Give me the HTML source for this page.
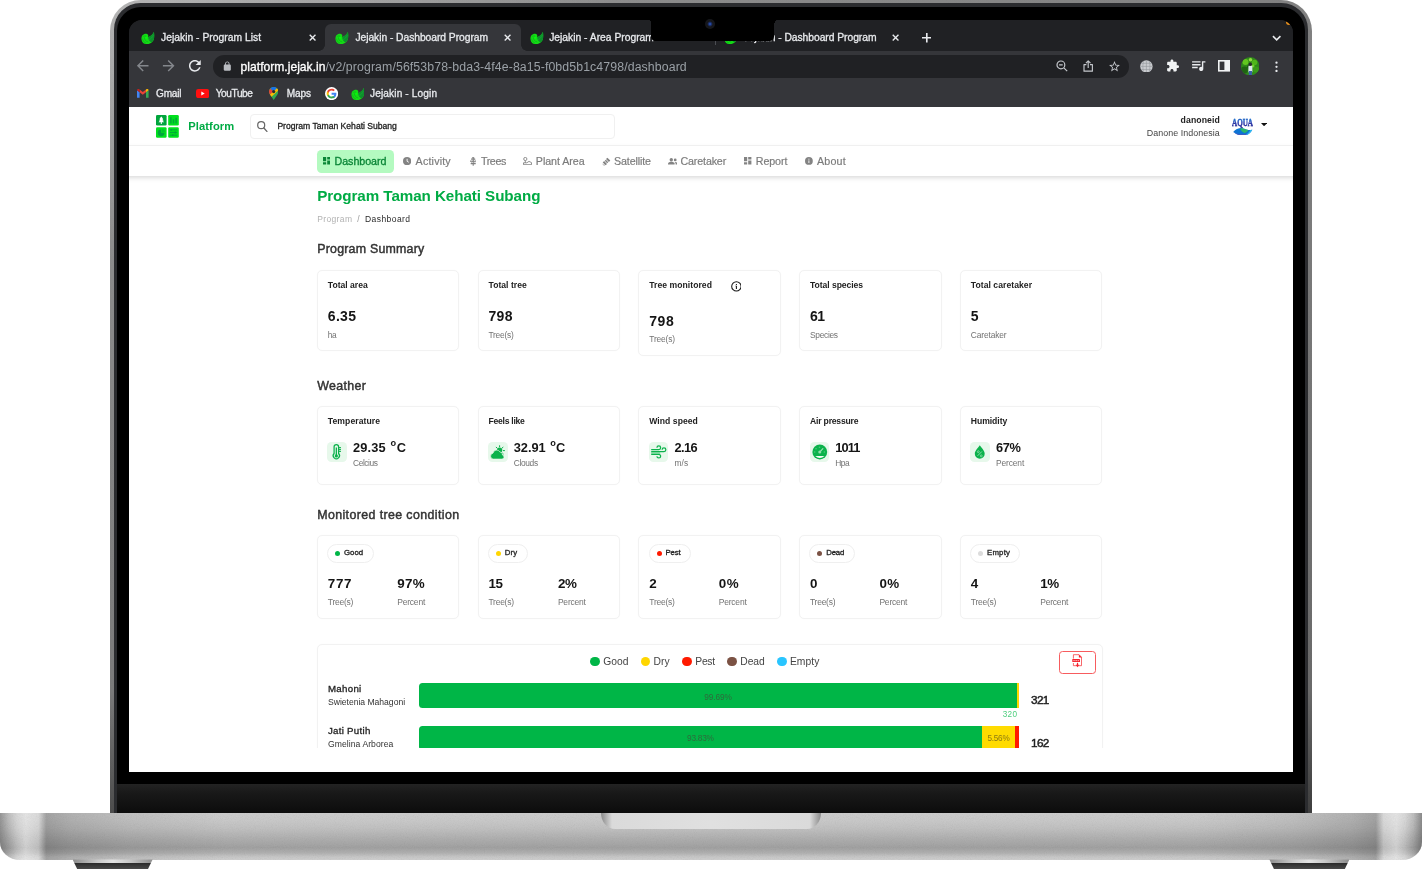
<!DOCTYPE html>
<html lang="en">
<head>
<meta charset="utf-8">
<title>Jejakin - Dashboard Program</title>
<style>
*{box-sizing:border-box;margin:0;padding:0}
html,body{width:1422px;height:869px;background:#fff;overflow:hidden}
body{font-family:"Liberation Sans",sans-serif;position:relative}
.abs,.t,svg.i{position:absolute}
.t{white-space:pre;line-height:1;display:block}
.lid{left:110px;top:0;width:1202px;height:813px;border-radius:31px 31px 0 0;background:radial-gradient(ellipse 520px 260px at 0 0,rgba(255,255,255,.3),rgba(255,255,255,0)),linear-gradient(90deg,rgba(255,255,255,.05) 0,rgba(0,0,0,.09) 100%),linear-gradient(180deg,#8e8e8e 0,#828282 45%,#747474 85%,#4c4c4c 97%,#444 100%)}
.lid2{left:113.7px;top:3.4px;width:1194.4px;height:810px;border-radius:26.5px 26.5px 0 0;background:#2b2c2f}
.lid3{left:117.1px;top:7px;width:1187.7px;height:806px;border-radius:24px 24px 0 0;background:#000}
.chin{left:117.1px;top:784px;width:1187.7px;height:29px;background:linear-gradient(180deg,#232323 0,#191919 30%,#0c0c0c 100%)}
.screen{left:129px;top:20px;width:1164px;height:752.4px;border-radius:13px 13px 0 0;overflow:hidden;background:#202124}
.in{left:-129px;top:-20px;width:1422px;height:869px;will-change:transform}
.notch{left:651px;top:19px;width:123.4px;height:21.7px;background:#000;border-radius:0 0 4.5px 4.5px}
.base{left:0;top:812.7px;width:1422px;height:46.9px;border-radius:0 0 20px 20px/0 0 18px 18px;overflow:hidden;
 background:linear-gradient(180deg,#cecece 0,#cbcbcb 15%,#c2c2c2 33%,#b0b0b0 55%,#a2a2a2 74%,#b2b2b2 85%,#c8c8c8 93%,#d0d0d0 100%)}
.base:before{content:"";position:absolute;left:0;top:0;width:100%;height:100%;
 background:linear-gradient(90deg,rgba(70,70,70,.4) 0,rgba(90,90,90,.12) .6%,rgba(255,255,255,.25) 1.2%,rgba(255,255,255,.5) 1.8%,rgba(255,255,255,.3) 2.7%,rgba(0,0,0,.2) 3.25%,rgba(0,0,0,.13) 5%,rgba(0,0,0,.06) 9%,rgba(0,0,0,0) 16%,rgba(0,0,0,0) 84%,rgba(0,0,0,.06) 91%,rgba(0,0,0,.13) 95%,rgba(0,0,0,.2) 96.75%,rgba(255,255,255,.3) 97.3%,rgba(255,255,255,.5) 98.2%,rgba(255,255,255,.25) 98.8%,rgba(90,90,90,.12) 99.4%,rgba(60,60,60,.45) 100%)}
.lip{left:600.8px;top:812.8px;width:220.4px;height:16.2px;border-radius:0 0 14px 14px/0 0 16px 16px;background:linear-gradient(90deg,#8a8a8a 0,#dadada 5%,#e0e0e0 50%,#dadada 95%,#8a8a8a 100%)}
.foot{top:859.4px;height:10px;width:80px;background:linear-gradient(180deg,rgba(0,0,0,0) 0,rgba(0,0,0,0) 38%,#2b2b2b 42%,#4a4a4a 100%),linear-gradient(90deg,#8d8d8d 0,#c9c9c9 30%,#e3e3e3 50%,#c9c9c9 70%,#8d8d8d 100%);clip-path:polygon(0 0,100% 0,94% 100%,6% 100%)}
/* chrome */
.tabstrip{left:129px;top:20px;width:1164px;height:31.3px;background:#202124}
.toolbar{left:129px;top:51.3px;width:1164px;height:56px;background:#35363a}
.tabon{left:325px;top:24.3px;width:196px;height:27.2px;background:#35363a;border-radius:6px 6px 0 0}
.tabon:before,.tabon:after{content:"";position:absolute;bottom:0;width:6px;height:6px;background:radial-gradient(circle at 0 0,rgba(0,0,0,0) 5.5px,#35363a 6px)}
.tabon:before{left:-6px}
.tabon:after{right:-6px;background:radial-gradient(circle at 100% 0,rgba(0,0,0,0) 5.5px,#35363a 6px)}
.omni{left:213.3px;top:55px;width:915.7px;height:22.5px;border-radius:11.3px;background:#202124}
.ct{-webkit-text-stroke:.3px currentColor}
/* app */
.hdr{left:129px;top:107.4px;width:1164px;height:39px;background:#fff;border-bottom:1px solid #f5f5f5}
.nav{left:115px;top:146.4px;width:1192px;height:30px;background:#fff;box-shadow:0 1.5px 5px rgba(0,0,0,.17)}
.search{left:250.4px;top:114.2px;width:364.8px;height:24.4px;border:1px solid #f0f0f0;border-radius:4px;background:#fff}
.pillnav{left:316.8px;top:149.8px;width:77px;height:22.8px;border-radius:4.5px;background:#b4fac0}
.card{border:1px solid #f2f2f2;border-radius:5px;background:#fff;box-shadow:0 0 1.5px rgba(0,0,0,.025)}
.ib{width:19.6px;height:19.8px;border-radius:4.5px;background:#e7f8eb}
.pill{height:19px;border:1px solid #efefef;border-radius:9.5px;background:#fff}
.dot{border-radius:50%}
.pageclip{left:129px;top:107.4px;width:1164px;height:640.6px;overflow:hidden}
.pagein{left:-129px;top:-107.4px;width:1422px;height:869px}

.md1{-webkit-text-stroke:.18px currentColor}.md{-webkit-text-stroke:.3px currentColor}.md2{-webkit-text-stroke:.45px currentColor}
</style>
</head>
<body>
<div class="abs lid">
</div>
<div class="abs lid2">
</div>
<div class="abs lid3">
</div>
<div class="abs chin">
</div>
<div class="abs screen">
<div class="abs in">
<div class="abs" style="left:129px;top:107.4px;width:1164px;height:666px;background:#fff">
</div>
<div class="abs tabstrip">
</div>
<div class="abs toolbar">
</div>
<div class="abs tabon">
</div>
<svg class="i" style="left:141.3px;top:32.1px" width="13.4" height="12.3" viewBox="0 0 24 22" >
<path d="M23.1.2C23.9 4 24 9 23 13 22 17 18 20.500 13 21.600 9 22.400 4 21 2 17 .3 13.500 .3 9 2.500 6 4.500 3.600 8 2.600 10.800 3.400 12.600 4 13.400 5.600 12.900 7.200 12.600 8 12.700 8.800 13.200 9 17 8 21 5 23.100.2Z" fill="#14dd14"/>
<path d="M23.100.2C23.900 4 24 9 23 13 22.300 15.500 20.600 17.400 18.600 18.500 16 17.600 14 15.200 13.400 12.500 13.100 11.200 13 10 13.200 9 17 8 21 5 23.100.2Z" fill="#0d8f2b"/>
<path d="M14.500 13.500C17.500 12.500 20.500 9.500 22.300 5.500" stroke="#19b53a" stroke-width=".9" fill="none"/>
<path d="M3.600 8.200C5 7 7 6.800 8.600 7.400M6.200 10.500C6.200 14 8.500 17 12.500 17.800M3 12.500C3.200 15.500 5 18.200 8 19.500" stroke="#0aa51e" stroke-width="1.100" fill="none" stroke-linecap="round"/>
<circle cx="9.300" cy="10.400" r="1.900" fill="#00ff0a"/>
</svg>
<span class="t ct" style="left:161.0px;top:32.7px;font-size:10.3px;font-weight:400;color:#e8eaed;letter-spacing:0.02px;">Jejakin - Program List</span>
<svg class="i" style="left:335.4px;top:32.1px" width="13.4" height="12.3" viewBox="0 0 24 22" >
<path d="M23.1.2C23.9 4 24 9 23 13 22 17 18 20.500 13 21.600 9 22.400 4 21 2 17 .3 13.500 .3 9 2.500 6 4.500 3.600 8 2.600 10.800 3.400 12.600 4 13.400 5.600 12.900 7.200 12.600 8 12.700 8.800 13.200 9 17 8 21 5 23.100.2Z" fill="#14dd14"/>
<path d="M23.100.2C23.900 4 24 9 23 13 22.300 15.500 20.600 17.400 18.600 18.500 16 17.600 14 15.200 13.400 12.500 13.100 11.200 13 10 13.200 9 17 8 21 5 23.100.2Z" fill="#0d8f2b"/>
<path d="M14.500 13.500C17.500 12.500 20.500 9.500 22.300 5.500" stroke="#19b53a" stroke-width=".9" fill="none"/>
<path d="M3.600 8.200C5 7 7 6.800 8.600 7.400M6.200 10.500C6.200 14 8.500 17 12.500 17.800M3 12.500C3.200 15.500 5 18.200 8 19.500" stroke="#0aa51e" stroke-width="1.100" fill="none" stroke-linecap="round"/>
<circle cx="9.300" cy="10.400" r="1.900" fill="#00ff0a"/>
</svg>
<span class="t ct" style="left:355.4px;top:32.7px;font-size:10.3px;font-weight:400;color:#e8eaed;letter-spacing:-0.05px;">Jejakin - Dashboard Program</span>
<svg class="i" style="left:530.3px;top:32.1px" width="13.4" height="12.3" viewBox="0 0 24 22" >
<path d="M23.1.2C23.9 4 24 9 23 13 22 17 18 20.500 13 21.600 9 22.400 4 21 2 17 .3 13.500 .3 9 2.500 6 4.500 3.600 8 2.600 10.800 3.400 12.600 4 13.400 5.600 12.900 7.200 12.600 8 12.700 8.800 13.200 9 17 8 21 5 23.100.2Z" fill="#14dd14"/>
<path d="M23.100.2C23.900 4 24 9 23 13 22.300 15.500 20.600 17.400 18.600 18.500 16 17.600 14 15.200 13.400 12.500 13.100 11.200 13 10 13.200 9 17 8 21 5 23.100.2Z" fill="#0d8f2b"/>
<path d="M14.500 13.500C17.500 12.500 20.500 9.500 22.300 5.500" stroke="#19b53a" stroke-width=".9" fill="none"/>
<path d="M3.600 8.200C5 7 7 6.800 8.600 7.400M6.200 10.500C6.200 14 8.500 17 12.500 17.800M3 12.500C3.200 15.500 5 18.200 8 19.500" stroke="#0aa51e" stroke-width="1.100" fill="none" stroke-linecap="round"/>
<circle cx="9.300" cy="10.400" r="1.900" fill="#00ff0a"/>
</svg>
<span class="t ct" style="left:549.2px;top:32.7px;font-size:10.3px;font-weight:400;color:#e8eaed;">Jejakin - Area Program</span>
<div class="abs" style="left:714.5px;top:31px;width:1px;height:14px;background:#4b4d52">
</div>
<svg class="i" style="left:723.8px;top:32.1px" width="13.4" height="12.3" viewBox="0 0 24 22" >
<path d="M23.1.2C23.9 4 24 9 23 13 22 17 18 20.500 13 21.600 9 22.400 4 21 2 17 .3 13.500 .3 9 2.500 6 4.500 3.600 8 2.600 10.800 3.400 12.600 4 13.400 5.600 12.900 7.200 12.600 8 12.700 8.800 13.200 9 17 8 21 5 23.100.2Z" fill="#14dd14"/>
<path d="M23.100.2C23.900 4 24 9 23 13 22.300 15.500 20.600 17.400 18.600 18.500 16 17.600 14 15.200 13.400 12.500 13.100 11.200 13 10 13.200 9 17 8 21 5 23.100.2Z" fill="#0d8f2b"/>
<path d="M14.500 13.500C17.500 12.500 20.500 9.500 22.300 5.500" stroke="#19b53a" stroke-width=".9" fill="none"/>
<path d="M3.600 8.200C5 7 7 6.800 8.600 7.400M6.200 10.500C6.200 14 8.500 17 12.500 17.800M3 12.500C3.200 15.500 5 18.200 8 19.500" stroke="#0aa51e" stroke-width="1.100" fill="none" stroke-linecap="round"/>
<circle cx="9.300" cy="10.400" r="1.900" fill="#00ff0a"/>
</svg>
<span class="t ct" style="left:743.6px;top:32.7px;font-size:10.3px;font-weight:400;color:#e8eaed;letter-spacing:-0.04px;">Jejakin - Dashboard Program</span>
<svg class="i" style="left:309.4px;top:34.4px" width="7.2" height="7.2" viewBox="0 0 10 10" >
<path d="M1 1l8 8M9 1l-8 8" stroke="#e8eaed" stroke-width="1.9" fill="none"/>
</svg>
<svg class="i" style="left:504.2px;top:34.4px" width="7.2" height="7.2" viewBox="0 0 10 10" >
<path d="M1 1l8 8M9 1l-8 8" stroke="#e8eaed" stroke-width="1.9" fill="none"/>
</svg>
<svg class="i" style="left:892.0px;top:34.4px" width="7.2" height="7.2" viewBox="0 0 10 10" >
<path d="M1 1l8 8M9 1l-8 8" stroke="#e8eaed" stroke-width="1.9" fill="none"/>
</svg>
<svg class="i" style="left:921.9px;top:33.2px" width="9.6" height="9.6" viewBox="0 0 10 10" >
<path d="M5 0v10M0 5h10" stroke="#e8eaed" stroke-width="1.7" fill="none"/>
</svg>
<svg class="i" style="left:1271.6px;top:34.8px" width="9.4" height="6.0" viewBox="0 0 10 6" >
<path d="M1 1l4 4 4-4" stroke="#e8eaed" stroke-width="1.7" fill="none"/>
</svg>
<div class="abs dot" style="left:1285.5px;top:19px;width:6px;height:6px;background:#e8901c">
</div>
<svg class="i" style="left:134.3px;top:57.3px" width="17.4" height="17.4" viewBox="0 0 24 24" >
<path fill="#84878c" d="M20 11H7.83l5.59-5.59L12 4l-8 8 8 8 1.41-1.41L7.83 13H20v-2z"/>
</svg>
<svg class="i" style="left:160.2px;top:57.3px" width="17.4" height="17.4" viewBox="0 0 24 24" >
<path fill="#84878c" d="M12 4l-1.41 1.41L16.17 11H4v2h12.17l-5.58 5.59L12 20l8-8z"/>
</svg>
<svg class="i" style="left:186.3px;top:57.1px" width="17.7" height="17.7" viewBox="0 0 24 24" >
<path fill="#e8eaed" d="M17.65 6.35C16.2 4.9 14.21 4 12 4c-4.42 0-7.99 3.58-7.99 8s3.57 8 7.99 8c3.73 0 6.84-2.55 7.73-6h-2.08c-.82 2.33-3.04 4-5.65 4-3.31 0-6-2.69-6-6s2.69-6 6-6c1.66 0 3.14.69 4.22 1.78L13 11h7V4l-2.35 2.35z"/>
</svg>
<div class="abs omni">
</div>
<svg class="i" style="left:222.1px;top:61.3px" width="10.6" height="10.6" viewBox="0 0 24 24" >
<path fill="#b9bcc1" d="M18 8h-1V6c0-2.76-2.24-5-5-5S7 3.24 7 6v2H6c-1.1 0-2 .9-2 2v10c0 1.1.9 2 2 2h12c1.1 0 2-.9 2-2V10c0-1.1-.9-2-2-2zM9 6c0-1.66 1.34-3 3-3s3 1.34 3 3v2H9V6z"/>
</svg>
<span class="t ct" style="left:240.6px;top:61.0px;font-size:12.1px;font-weight:400;color:#ffffff;letter-spacing:0.01px;">platform.jejak.in</span>
<span class="t" style="left:325.6px;top:60.8px;font-size:12.3px;font-weight:400;color:#9aa0a6;letter-spacing:0.11px;">/v2/program/56f53b78-bda3-4f4e-8a15-f0bd5b1c4798/dashboard</span>
<svg class="i" style="left:1056.0px;top:60.2px" width="12.0" height="12.0" viewBox="0 0 12 12" >
<circle cx="4.9" cy="4.9" r="3.9" fill="none" stroke="#c4c7cc" stroke-width="1.2"/>
<path d="M7.8 7.8l3.4 3.4M3.1 4.9h3.6" stroke="#c4c7cc" stroke-width="1.2" fill="none"/>
</svg>
<svg class="i" style="left:1083.0px;top:60.2px" width="10.4" height="12.0" viewBox="0 0 10.4 12" >
<path d="M3.4 4.6H1v6.6h8.4V4.6H7M5.2 8V1M2.9 3.1L5.2.9l2.3 2.2" stroke="#c4c7cc" stroke-width="1.15" fill="none" stroke-linejoin="round"/>
</svg>
<svg class="i" style="left:1107.6px;top:59.8px" width="13.0" height="13.0" viewBox="0 0 24 24" >
<path fill="#c4c7cc" d="M22 9.24l-7.19-.62L12 2 9.19 8.63 2 9.24l5.46 4.73L5.82 21 12 17.27 18.18 21l-1.63-7.03L22 9.24zM12 15.4l-3.76 2.27 1-4.28-3.32-2.88 4.38-.38L12 6.1l1.71 4.04 4.38.38-3.32 2.88 1 4.28L12 15.4z"/>
</svg>
<svg class="i" style="left:1139.8px;top:59.7px" width="12.8" height="12.8" viewBox="0 0 12.8 12.8" >
<circle cx="6.4" cy="6.4" r="6.2" fill="#c9cbcf"/>
<path d="M6.4.2v12.4M.2 6.4h12.4M1.2 3.3h10.4M1.2 9.5h10.4M3.6.9C2.6 4 2.6 8.8 3.6 11.9M9.2.9c1 3.100 1 7.900 0 11" stroke="#8f9296" stroke-width=".55" fill="none"/>
</svg>
<svg class="i" style="left:1165.6px;top:59.3px" width="13.6" height="13.6" viewBox="0 0 24 24" >
<path fill="#f1f3f4" d="M20.5 11H19V7c0-1.1-.9-2-2-2h-4V3.500C13 2.120 11.880 1 10.500 1S8 2.120 8 3.500V5H4c-1.100 0-1.990.9-1.990 2v3.800H3.500c1.490 0 2.700 1.210 2.700 2.700s-1.210 2.700-2.700 2.700H2V20c0 1.100.9 2 2 2h3.800v-1.500c0-1.490 1.210-2.700 2.700-2.700 1.490 0 2.700 1.210 2.700 2.700V22H17c1.100 0 2-.9 2-2v-4h1.500c1.380 0 2.500-1.120 2.500-2.500S21.880 11 20.500 11z"/>
</svg>
<svg class="i" style="left:1189.6px;top:56.8px" width="16.8" height="16.8" viewBox="0 0 24 24" >
<path fill="#e8eaed" d="M15 6H3v2h12V6zm0 4H3v2h12v-2zM3 16h8v-2H3v2zM17 6v8.180c-.310-.110-.650-.180-1-.180-1.660 0-3 1.340-3 3s1.340 3 3 3 3-1.340 3-3V8h3V6h-5z"/>
</svg>
<svg class="i" style="left:1218.4px;top:60.4px" width="12.0" height="11.6" viewBox="0 0 12 11.6" >
<rect x=".8" y=".8" width="10.4" height="10" fill="none" stroke="#f1f3f4" stroke-width="1.6"/>
<rect x="6.4" y=".8" width="4.8" height="10" fill="#f1f3f4"/>
</svg>
<svg class="i" style="left:1241.0px;top:56.8px" width="18.4" height="18.4" viewBox="0 0 18.4 18.4" >
<defs>
<clipPath id="av">
<circle cx="9.2" cy="9.2" r="9.2"/>
</clipPath>
</defs>
<g clip-path="url(#av)">
<rect width="18.4" height="18.4" fill="#2f8a1a"/>
<circle cx="4.500" cy="5" r="3" fill="#62c61f"/>
<circle cx="13.500" cy="5.500" r="2.800" fill="#4fb51a"/>
<circle cx="3.500" cy="13" r="3.400" fill="#1f6412"/>
<circle cx="15" cy="12.500" r="3" fill="#3a9a18"/>
<circle cx="9.500" cy="2.800" r="1.800" fill="#8fdc3e"/>
<circle cx="8" cy="10" r="2" fill="#1d5c12"/>
<circle cx="12" cy="9" r="1.500" fill="#6fd22b"/>
<rect x="7.400" y="8.600" width="4" height="7" rx="1.200" fill="#dfe6ee"/>
<rect x="7.800" y="14" width="3.200" height="4.400" fill="#3a5fa8"/>
<circle cx="9.300" cy="7.300" r="1.700" fill="#2a2a2a"/>
</g>
</svg>
<svg class="i" style="left:1275.2px;top:60.6px" width="3.0" height="11.6" viewBox="0 0 3 11.6" >
<circle cx="1.5" cy="1.7" r="1.150" fill="#e8eaed"/>
<circle cx="1.5" cy="5.800" r="1.150" fill="#e8eaed"/>
<circle cx="1.5" cy="9.900" r="1.150" fill="#e8eaed"/>
</svg>
<svg class="i" style="left:137.2px;top:89.2px" width="11.6" height="8.8" viewBox="0 0 11.6 8.8" >
<path d="M0 8.800V1.300L2.600 3.300v5.500z" fill="#4285f4"/>
<path d="M11.600 8.800V1.300L9 3.300v5.500z" fill="#34a853"/>
<path d="M2.600 3.300L5.800 5.700 9 3.300V.5L5.800 2.900 2.600.5z" fill="#ea4335"/>
<path d="M0 1.300C0 .2 1.200-.4 2.100.2L2.600.5v2.800z" fill="#c5221f"/>
<path d="M11.600 1.300c0-1.100-1.200-1.700-2.100-1.100L9 .5v2.800z" fill="#fbbc04"/>
</svg>
<span class="t ct" style="left:156.1px;top:89.1px;font-size:10.1px;font-weight:400;color:#e8eaed;letter-spacing:-0.26px;">Gmail</span>
<svg class="i" style="left:195.7px;top:89.1px" width="13.2" height="9.1" viewBox="0 0 13.2 9.1" >
<rect width="13.2" height="9.1" rx="2.300" fill="#ff0f0f"/>
<path d="M5.300 2.600v3.900l3.400-1.950z" fill="#fff"/>
</svg>
<span class="t ct" style="left:215.7px;top:89.1px;font-size:10.1px;font-weight:400;color:#e8eaed;letter-spacing:-0.40px;">YouTube</span>
<svg class="i" style="left:269.0px;top:87.2px" width="9.4" height="12.9" viewBox="0 0 9.4 12.9" >
<path d="M4.700 0C2.100 0 0 2.100 0 4.700c0 1.100.4 2.100 1 2.900L4.700 12.900 8.400 7.600c.6-.8 1-1.800 1-2.900C9.400 2.100 7.300 0 4.700 0z" fill="#34a853"/>
<path d="M4.700 0C3.300 0 2 .6 1.200 1.600L4.700 4.700 8 1.300C7.200.5 6 0 4.700 0z" fill="#1a73e8"/>
<path d="M1.200 1.600C.4 2.400 0 3.500 0 4.700c0 1.100.4 2.100 1 2.900L4.700 4.700z" fill="#ea4335"/>
<path d="M8 1.300L1 7.600l1.500 2.100L9.300 3.600C9.100 2.700 8.600 1.900 8 1.300z" fill="#fbbc04"/>
<circle cx="4.700" cy="4.600" r="1.600" fill="#2a2b2e"/>
</svg>
<span class="t ct" style="left:286.7px;top:89.1px;font-size:10.1px;font-weight:400;color:#e8eaed;letter-spacing:-0.13px;">Maps</span>
<svg class="i" style="left:324.8px;top:87.1px" width="13.2" height="13.2" viewBox="0 0 48 48" >
<circle cx="24" cy="24" r="24" fill="#fff"/>
<g transform="translate(24 24) scale(1.2) translate(-24 -24)">
<path fill="#4285f4" d="M38.500 24.400c0-1.100-.1-2.100-.3-3.100H24v5.900h8.100c-.3 1.900-1.400 3.500-3 4.500v3.800h4.900c2.800-2.600 4.500-6.500 4.500-11.100z"/>
<path fill="#34a853" d="M24 39c4.100 0 7.500-1.300 10-3.600l-4.900-3.800c-1.300.9-3.100 1.500-5.100 1.500-3.900 0-7.200-2.600-8.400-6.200h-5v3.900C13.100 35.700 18.200 39 24 39z"/>
<path fill="#fbbc05" d="M15.600 26.900c-.3-.9-.5-1.900-.5-2.900s.2-2 .5-2.900v-3.900h-5C9.600 19.200 9 21.500 9 24s.6 4.800 1.600 6.800z"/>
<path fill="#ea4335" d="M24 14.900c2.200 0 4.200.8 5.700 2.200l4.300-4.300C31.500 10.500 28.100 9 24 9c-5.800 0-10.900 3.300-13.400 8.200l5 3.900c1.200-3.600 4.500-6.200 8.400-6.200z"/>
</g>
</svg>
<svg class="i" style="left:350.8px;top:87.9px" width="13.4" height="12.3" viewBox="0 0 24 22" >
<path d="M23.1.2C23.9 4 24 9 23 13 22 17 18 20.500 13 21.600 9 22.400 4 21 2 17 .3 13.500 .3 9 2.500 6 4.500 3.600 8 2.600 10.800 3.400 12.600 4 13.400 5.600 12.900 7.200 12.600 8 12.700 8.800 13.200 9 17 8 21 5 23.100.2Z" fill="#14dd14"/>
<path d="M23.100.2C23.900 4 24 9 23 13 22.300 15.500 20.600 17.400 18.600 18.500 16 17.600 14 15.200 13.400 12.500 13.100 11.200 13 10 13.200 9 17 8 21 5 23.100.2Z" fill="#0d8f2b"/>
<path d="M14.500 13.500C17.500 12.500 20.500 9.500 22.300 5.500" stroke="#19b53a" stroke-width=".9" fill="none"/>
<path d="M3.600 8.200C5 7 7 6.800 8.600 7.400M6.200 10.500C6.200 14 8.500 17 12.500 17.800M3 12.500C3.200 15.500 5 18.200 8 19.500" stroke="#0aa51e" stroke-width="1.100" fill="none" stroke-linecap="round"/>
<circle cx="9.300" cy="10.400" r="1.900" fill="#00ff0a"/>
</svg>
<span class="t ct" style="left:370.0px;top:89.1px;font-size:10.1px;font-weight:400;color:#e8eaed;letter-spacing:0.14px;">Jejakin - Login</span>
<div class="abs hdr">
</div>
<svg class="i" style="left:156.3px;top:115.3px" width="22.8" height="22.8" viewBox="0 0 22.8 22.8" >
<rect x="0" y="0" width="10.6" height="10.6" rx="1.300" fill="#00a53c"/>
<rect x="12.2" y="0" width="10.6" height="10.6" rx="1.300" fill="#00e11d"/>
<rect x="0" y="12.2" width="10.6" height="10.6" rx="1.300" fill="#00e11d"/>
<rect x="12.2" y="12.2" width="10.6" height="10.6" rx="1.300" fill="#00e11d"/>
<path d="M5.300 1.600L7.200 3.700H6.300L7.700 5.400H6.500L8.100 7.300H5.800V9H4.800V7.300H2.500L4.100 5.400H2.900L4.300 3.700H3.400z" fill="#fff"/>
<path d="M14.200 2.200h1.400v6.200h-1.400zM16.800 4.200h1.400v4.200h-1.400zM19.400 2.800h1.400v5.600h-1.400z" fill="#00a53c"/>
<path d="M5.100 14.400v3.400h3.400a3.400 3.400 0 1 1-3.400-3.400z" fill="#00a53c"/>
<path d="M5.900 13.900a3.200 3.200 0 0 1 3.100 3.100H5.900z" fill="#00c42c"/>
<path d="M13.900 14.800h7.200M13.900 17.500h7.200M13.900 20.200h7.200" stroke="#00a53c" stroke-width=".9"/>
<path d="M15.300 13.900v1.800M19.300 16.600v1.800M16.700 19.300v1.800" stroke="#00a53c" stroke-width="1.300"/>
</svg>
<span class="t" style="left:188.2px;top:121.0px;font-size:11.2px;font-weight:700;color:#00ab44;letter-spacing:0.09px;">Platform</span>
<div class="abs search">
</div>
<svg class="i" style="left:257.2px;top:121.2px" width="10.4" height="11.0" viewBox="0 0 10.4 11" >
<circle cx="4.200" cy="4.200" r="3.500" fill="none" stroke="#686868" stroke-width="1.250"/>
<path d="M6.900 7l3 3.400" stroke="#686868" stroke-width="1.350" stroke-linecap="round"/>
</svg>
<span class="t md" style="left:277.4px;top:122.1px;font-size:8.6px;font-weight:400;color:#222;letter-spacing:-0.01px;">Program Taman Kehati Subang</span>
<span class="t" style="left:1180.6px;top:116.0px;font-size:8.7px;font-weight:700;color:#222;letter-spacing:0.08px;">danoneid</span>
<span class="t" style="left:1146.8px;top:128.6px;font-size:8.9px;font-weight:400;color:#444;letter-spacing:0.06px;">Danone Indonesia</span>
<span class="t" style="left:1232.1px;top:118.3px;font-size:10.2px;font-weight:700;color:#2c36a6;font-family:&quot;Liberation Serif&quot;,serif;transform:scaleX(.7);transform-origin:0 0;background:linear-gradient(180deg,#1c8ee2 8%,#2a3cae 45%,#2b2c96 80%);-webkit-background-clip:text;background-clip:text;color:transparent;-webkit-text-stroke:.35px rgba(43,50,160,.55);">AQUA</span>
<svg class="i" style="left:1233.3px;top:127.7px" width="19.4" height="7.8" viewBox="0 0 19.4 7.8" >
<path d="M.2 4C2 2 4.5.4 7.6.1 10 .1 12.5 1.6 15.3 1.9 16.8 2 18.2 1.8 19.3 1.7 18 4.5 15.2 7.3 11.1 7.7 7 8 3 6 .2 4Z" fill="#0d74d4"/>
<path d="M7.2.1C10 .1 12.5 1.6 15.3 1.9 14.5 3.6 13 4.8 11.5 5 9.5 4.6 7.6 2.6 7.2.1Z" fill="#2cb76c"/>
<path d="M19.3 1.7C18 4.5 15.2 7.3 11.1 7.7 14 6.3 16.3 4.3 17.3 2Z" fill="#2fb9f2"/>
<path d="M.2 4C3.5 5.8 7 6.6 10.5 6.3 12 6.2 13.2 5.8 14.3 5.2 13.3 6.6 12.2 7.5 11.1 7.7 7 8 3 6 .2 4Z" fill="#4a58c0"/>
</svg>
<svg class="i" style="left:1261.1px;top:122.9px" width="6.2" height="3.3" viewBox="0 0 6.2 3.2" >
<path d="M0 0h6.200L3.100 3.200z" fill="#111"/>
</svg>
<div class="abs pageclip">
<div class="abs pagein">
<span class="t" style="left:317.2px;top:188.4px;font-size:15.2px;font-weight:700;color:#00ab44;letter-spacing:-0.07px;">Program Taman Kehati Subang</span>
<span class="t" style="left:317.2px;top:214.5px;font-size:8.5px;font-weight:400;color:#b2b2b2;letter-spacing:0.37px;">Program</span>
<span class="t" style="left:357.3px;top:214.5px;font-size:8.5px;font-weight:400;color:#999;">/</span>
<span class="t" style="left:365.0px;top:214.5px;font-size:8.5px;font-weight:400;color:#2a2a2a;letter-spacing:0.43px;">Dashboard</span>
<span class="t md2" style="left:317.2px;top:243.2px;font-size:12.4px;font-weight:400;color:#333;letter-spacing:0.22px;">Program Summary</span>
<span class="t md2" style="left:317.2px;top:379.9px;font-size:12.4px;font-weight:400;color:#333;letter-spacing:0.33px;">Weather</span>
<span class="t md2" style="left:317.2px;top:508.9px;font-size:12.4px;font-weight:400;color:#333;letter-spacing:0.39px;">Monitored tree condition</span>
<div class="abs card" style="left:316.9px;top:270.0px;width:142.5px;height:80.5px">
</div>
<span class="t" style="left:327.8px;top:281.0px;font-size:8.6px;font-weight:700;color:#222;">Total area</span>
<span class="t" style="left:327.8px;top:309.0px;font-size:14px;font-weight:700;color:#151515;letter-spacing:0.32px;">6.35</span>
<span class="t" style="left:327.8px;top:330.8px;font-size:8.4px;font-weight:400;color:#727272;letter-spacing:-0.50px;">ha</span>
<div class="abs card" style="left:477.6px;top:270.0px;width:142.5px;height:80.5px">
</div>
<span class="t" style="left:488.5px;top:281.0px;font-size:8.6px;font-weight:700;color:#222;letter-spacing:0.02px;">Total tree</span>
<span class="t" style="left:488.5px;top:309.0px;font-size:14px;font-weight:700;color:#151515;letter-spacing:0.32px;">798</span>
<span class="t" style="left:488.5px;top:330.8px;font-size:8.4px;font-weight:400;color:#727272;letter-spacing:-0.25px;">Tree(s)</span>
<div class="abs card" style="left:638.4px;top:270.0px;width:142.5px;height:85.9px">
</div>
<span class="t" style="left:649.3px;top:281.0px;font-size:8.6px;font-weight:700;color:#222;letter-spacing:0.04px;">Tree monitored</span>
<span class="t" style="left:649.3px;top:313.7px;font-size:14px;font-weight:700;color:#151515;letter-spacing:0.52px;">798</span>
<span class="t" style="left:649.3px;top:335.0px;font-size:8.4px;font-weight:400;color:#727272;letter-spacing:-0.16px;">Tree(s)</span>
<div class="abs card" style="left:799.1px;top:270.0px;width:142.5px;height:80.5px">
</div>
<span class="t" style="left:810.0px;top:281.0px;font-size:8.6px;font-weight:700;color:#222;letter-spacing:-0.06px;">Total species</span>
<span class="t" style="left:810.0px;top:309.0px;font-size:14px;font-weight:700;color:#151515;letter-spacing:-0.50px;">61</span>
<span class="t" style="left:810.0px;top:330.8px;font-size:8.4px;font-weight:400;color:#727272;letter-spacing:-0.30px;">Species</span>
<div class="abs card" style="left:959.9px;top:270.0px;width:142.5px;height:80.5px">
</div>
<span class="t" style="left:970.8px;top:281.0px;font-size:8.6px;font-weight:700;color:#222;letter-spacing:0.05px;">Total caretaker</span>
<span class="t" style="left:970.8px;top:309.0px;font-size:14px;font-weight:700;color:#151515;">5</span>
<span class="t" style="left:970.8px;top:330.8px;font-size:8.4px;font-weight:400;color:#727272;letter-spacing:-0.12px;">Caretaker</span>
<svg class="i" style="left:730.7px;top:281.2px" width="10.8" height="10.8" viewBox="0 0 10.800 10.800" >
<circle cx="5.400" cy="5.400" r="4.700" fill="none" stroke="#151515" stroke-width="1.050"/>
<path d="M5.400 4.900v3M4.600 5h.8M5.400 3v1" stroke="#151515" stroke-width="1.050" fill="none"/>
</svg>
<div class="abs card" style="left:316.9px;top:405.6px;width:142.5px;height:79.2px">
</div>
<span class="t" style="left:327.8px;top:416.5px;font-size:8.6px;font-weight:700;color:#222;letter-spacing:0.08px;">Temperature</span>
<div class="abs ib" style="left:327.3px;top:441.8px">
</div>
<span class="t" style="left:353.0px;top:441.6px;font-size:12.8px;font-weight:700;color:#151515;letter-spacing:0.14px;">29.35 <sup style="font-size:9.2px;line-height:0;vertical-align:5.6px;margin:0 .3px 0 1.2px">o</sup>C</span>
<span class="t" style="left:353.0px;top:459.4px;font-size:8.4px;font-weight:400;color:#727272;letter-spacing:-0.41px;">Celcius</span>
<svg class="i" style="left:327.3px;top:441.8px" width="19.7" height="19.7" viewBox="0 0 19.7 19.7" >
<path d="M7.1 4.85a2.250 2.250 0 0 1 4.5 0V11.500a3.100 3.100 0 1 1-4.500 0z" fill="none" stroke="#0bb24b" stroke-width="1.250"/>
<path d="M9.350 5.600v8" stroke="#0bb24b" stroke-width="1.300"/>
<circle cx="9.350" cy="13.900" r="1.600" fill="#0bb24b"/>
<path d="M12.100 5.700h1.800M12.100 7.600h1.800M12.100 9.500h1.800" stroke="#0bb24b" stroke-width="1.200"/>
</svg>
<div class="abs card" style="left:477.6px;top:405.6px;width:142.5px;height:79.2px">
</div>
<span class="t" style="left:488.5px;top:416.5px;font-size:8.6px;font-weight:700;color:#222;letter-spacing:-0.26px;">Feels like</span>
<div class="abs ib" style="left:488.0px;top:441.8px">
</div>
<span class="t" style="left:513.8px;top:441.6px;font-size:12.8px;font-weight:700;color:#151515;letter-spacing:-0.06px;">32.91 <sup style="font-size:9.2px;line-height:0;vertical-align:5.6px;margin:0 .3px 0 1.2px">o</sup>C</span>
<span class="t" style="left:513.8px;top:459.4px;font-size:8.4px;font-weight:400;color:#727272;letter-spacing:-0.36px;">Clouds</span>
<svg class="i" style="left:488.0px;top:441.8px" width="19.7" height="19.7" viewBox="0 0 19.7 19.7" >
<circle cx="11.600" cy="8.100" r="2.700" fill="#0bb24b"/>
<path d="M11.600 3.700v1M8.200 5.300l.9.700M15 5.300l-.9.700M15.400 8.600h1.100M14.300 11.100l.9.700" stroke="#0bb24b" stroke-width="1" stroke-linecap="round"/>
<path d="M5.600 17.100a3 3 0 0 1-.6-5.940 3.700 3.700 0 0 1 6.900-1.200 2.700 2.700 0 0 1 2.600 3.100 2.050 2.050 0 0 1-.500 4.040z" fill="#0bb24b" stroke="#e6f8ea" stroke-width=".7"/>
</svg>
<div class="abs card" style="left:638.4px;top:405.6px;width:142.5px;height:79.2px">
</div>
<span class="t" style="left:649.3px;top:416.5px;font-size:8.6px;font-weight:700;color:#222;letter-spacing:0.04px;">Wind speed</span>
<div class="abs ib" style="left:648.8px;top:441.8px">
</div>
<span class="t" style="left:674.5px;top:441.6px;font-size:12.8px;font-weight:700;color:#151515;letter-spacing:-0.57px;">2.16</span>
<span class="t" style="left:674.5px;top:459.4px;font-size:8.4px;font-weight:400;color:#727272;letter-spacing:0.10px;">m/s</span>
<svg class="i" style="left:648.8px;top:441.8px" width="19.7" height="19.7" viewBox="0 0 19.7 19.7" >
<path d="M2.200 7.600h7.600a1.850 1.850 0 1 0-1.850-1.850M2.200 9.700h12.800a1.850 1.850 0 1 0-1.850-1.850M2.200 12.300h7.600a1.850 1.850 0 1 1-1.850 1.850" fill="none" stroke="#0bb24b" stroke-width="1.250"/>
<path d="M2.200 11h9" stroke="#5fcf8a" stroke-width="1.400"/>
</svg>
<div class="abs card" style="left:799.1px;top:405.6px;width:142.5px;height:79.2px">
</div>
<span class="t" style="left:810.0px;top:416.5px;font-size:8.6px;font-weight:700;color:#222;letter-spacing:-0.19px;">Air pressure</span>
<div class="abs ib" style="left:809.5px;top:441.8px">
</div>
<span class="t" style="left:835.2px;top:441.6px;font-size:12.8px;font-weight:700;color:#151515;letter-spacing:-0.83px;">1011</span>
<span class="t" style="left:835.2px;top:459.4px;font-size:8.4px;font-weight:400;color:#727272;letter-spacing:-0.49px;">Hpa</span>
<svg class="i" style="left:809.5px;top:441.8px" width="19.7" height="19.7" viewBox="0 0 19.7 19.7" >
<circle cx="9.800" cy="10" r="7.400" fill="#0bb24b"/>
<path d="M5.200 14h9.300Q9.850 18.200 5.200 14z" fill="#f4fcf6"/>
<path d="M9.900 9.900l3-3.300" stroke="#9fe3b8" stroke-width="1.100" stroke-linecap="round"/>
<circle cx="9.800" cy="10" r="1.550" fill="#8fdcab"/>
<circle cx="9.500" cy="5.200" r=".8" fill="#4fca7c"/>
<circle cx="6" cy="6.700" r=".8" fill="#4fca7c"/>
<circle cx="4.700" cy="10" r=".8" fill="#4fca7c"/>
<circle cx="14.400" cy="10" r=".8" fill="#4fca7c"/>
</svg>
<div class="abs card" style="left:959.9px;top:405.6px;width:142.5px;height:79.2px">
</div>
<span class="t" style="left:970.8px;top:416.5px;font-size:8.6px;font-weight:700;color:#222;letter-spacing:-0.04px;">Humidity</span>
<div class="abs ib" style="left:970.3px;top:441.8px">
</div>
<span class="t" style="left:996.0px;top:441.6px;font-size:12.8px;font-weight:700;color:#151515;letter-spacing:-0.31px;">67%</span>
<span class="t" style="left:996.0px;top:459.4px;font-size:8.4px;font-weight:400;color:#727272;letter-spacing:-0.11px;">Percent</span>
<svg class="i" style="left:970.3px;top:441.8px" width="19.7" height="19.7" viewBox="0 0 19.7 19.7" >
<path d="M9.800 3.200C11.500 5.800 14.700 8.600 14.700 11.700a4.950 4.950 0 0 1-9.900 0C4.800 8.600 8.100 5.800 9.800 3.200z" fill="#0bb24b"/>
<path d="M7.600 13.800l4.300-4.300" stroke="#8fdcab" stroke-width="1"/>
<circle cx="8.300" cy="9.700" r=".95" fill="none" stroke="#8fdcab" stroke-width=".8"/>
<circle cx="11.300" cy="13.900" r=".95" fill="none" stroke="#8fdcab" stroke-width=".8"/>
</svg>
<div class="abs card" style="left:316.9px;top:535.0px;width:142.5px;height:83.6px">
</div>
<div class="abs pill" style="left:327.1px;top:543.5px;width:47.1px">
</div>
<div class="abs dot" style="left:335.0px;top:550.9px;width:5px;height:5px;background:#00b647">
</div>
<span class="t md" style="left:344.0px;top:548.9px;font-size:7.8px;font-weight:400;color:#222;letter-spacing:0.04px;">Good</span>
<span class="t" style="left:327.8px;top:577.4px;font-size:13.4px;font-weight:700;color:#151515;letter-spacing:0.68px;">777</span>
<span class="t" style="left:397.2px;top:577.4px;font-size:13.4px;font-weight:700;color:#151515;letter-spacing:0.34px;">97%</span>
<span class="t" style="left:327.8px;top:598.2px;font-size:8.5px;font-weight:400;color:#727272;letter-spacing:-0.26px;">Tree(s)</span>
<span class="t" style="left:397.2px;top:598.2px;font-size:8.5px;font-weight:400;color:#727272;letter-spacing:-0.20px;">Percent</span>
<div class="abs card" style="left:477.6px;top:535.0px;width:142.5px;height:83.6px">
</div>
<div class="abs pill" style="left:487.8px;top:543.5px;width:40.3px">
</div>
<div class="abs dot" style="left:495.8px;top:550.9px;width:5px;height:5px;background:#ffd600">
</div>
<span class="t md" style="left:504.8px;top:548.9px;font-size:7.8px;font-weight:400;color:#222;letter-spacing:0.13px;">Dry</span>
<span class="t" style="left:488.5px;top:577.4px;font-size:13.4px;font-weight:700;color:#151515;letter-spacing:-0.50px;">15</span>
<span class="t" style="left:557.9px;top:577.4px;font-size:13.4px;font-weight:700;color:#151515;letter-spacing:-0.26px;">2%</span>
<span class="t" style="left:488.5px;top:598.2px;font-size:8.5px;font-weight:400;color:#727272;letter-spacing:-0.26px;">Tree(s)</span>
<span class="t" style="left:557.9px;top:598.2px;font-size:8.5px;font-weight:400;color:#727272;letter-spacing:-0.20px;">Percent</span>
<div class="abs card" style="left:638.4px;top:535.0px;width:142.5px;height:83.6px">
</div>
<div class="abs pill" style="left:648.6px;top:543.5px;width:42.7px">
</div>
<div class="abs dot" style="left:656.5px;top:550.9px;width:5px;height:5px;background:#ff1a00">
</div>
<span class="t md" style="left:665.5px;top:548.9px;font-size:7.8px;font-weight:400;color:#222;letter-spacing:-0.17px;">Pest</span>
<span class="t" style="left:649.3px;top:577.4px;font-size:13.4px;font-weight:700;color:#151515;">2</span>
<span class="t" style="left:718.7px;top:577.4px;font-size:13.4px;font-weight:700;color:#151515;letter-spacing:0.50px;">0%</span>
<span class="t" style="left:649.3px;top:598.2px;font-size:8.5px;font-weight:400;color:#727272;letter-spacing:-0.26px;">Tree(s)</span>
<span class="t" style="left:718.7px;top:598.2px;font-size:8.5px;font-weight:400;color:#727272;letter-spacing:-0.20px;">Percent</span>
<div class="abs card" style="left:799.1px;top:535.0px;width:142.5px;height:83.6px">
</div>
<div class="abs pill" style="left:809.4px;top:543.5px;width:45.9px">
</div>
<div class="abs dot" style="left:817.2px;top:550.9px;width:5px;height:5px;background:#7b5244">
</div>
<span class="t md" style="left:826.2px;top:548.9px;font-size:7.8px;font-weight:400;color:#222;letter-spacing:-0.15px;">Dead</span>
<span class="t" style="left:810.0px;top:577.4px;font-size:13.4px;font-weight:700;color:#151515;">0</span>
<span class="t" style="left:879.4px;top:577.4px;font-size:13.4px;font-weight:700;color:#151515;letter-spacing:0.50px;">0%</span>
<span class="t" style="left:810.0px;top:598.2px;font-size:8.5px;font-weight:400;color:#727272;letter-spacing:-0.26px;">Tree(s)</span>
<span class="t" style="left:879.4px;top:598.2px;font-size:8.5px;font-weight:400;color:#727272;letter-spacing:-0.20px;">Percent</span>
<div class="abs card" style="left:959.9px;top:535.0px;width:142.5px;height:83.6px">
</div>
<div class="abs pill" style="left:970.1px;top:543.5px;width:50.2px">
</div>
<div class="abs dot" style="left:978.0px;top:550.9px;width:5px;height:5px;background:#dcdcdc">
</div>
<span class="t md" style="left:987.0px;top:548.9px;font-size:7.8px;font-weight:400;color:#222;letter-spacing:0.20px;">Empty</span>
<span class="t" style="left:970.8px;top:577.4px;font-size:13.4px;font-weight:700;color:#151515;">4</span>
<span class="t" style="left:1040.2px;top:577.4px;font-size:13.4px;font-weight:700;color:#151515;letter-spacing:-0.50px;">1%</span>
<span class="t" style="left:970.8px;top:598.2px;font-size:8.5px;font-weight:400;color:#727272;letter-spacing:-0.26px;">Tree(s)</span>
<span class="t" style="left:1040.2px;top:598.2px;font-size:8.5px;font-weight:400;color:#727272;letter-spacing:-0.20px;">Percent</span>
<div class="abs card" style="left:317.1px;top:644.4px;width:785.5px;height:200.0px">
</div>
<div class="abs dot" style="left:590.4px;top:656.6px;width:9.7px;height:9.7px;background:#00b647">
</div>
<span class="t" style="left:603.2px;top:656.5px;font-size:10.3px;font-weight:400;color:#444;">Good</span>
<div class="abs dot" style="left:640.7px;top:656.6px;width:9.7px;height:9.7px;background:#ffd600">
</div>
<span class="t" style="left:653.6px;top:656.5px;font-size:10.3px;font-weight:400;color:#444;letter-spacing:-0.01px;">Dry</span>
<div class="abs dot" style="left:682.0px;top:656.6px;width:9.7px;height:9.7px;background:#ff1a00">
</div>
<span class="t" style="left:695.3px;top:656.5px;font-size:10.3px;font-weight:400;color:#444;letter-spacing:-0.27px;">Pest</span>
<div class="abs dot" style="left:727.4px;top:656.6px;width:9.7px;height:9.7px;background:#7b5244">
</div>
<span class="t" style="left:740.3px;top:656.5px;font-size:10.3px;font-weight:400;color:#444;letter-spacing:-0.07px;">Dead</span>
<div class="abs dot" style="left:777.2px;top:656.6px;width:9.7px;height:9.7px;background:#29c5ff">
</div>
<span class="t" style="left:789.9px;top:656.5px;font-size:10.3px;font-weight:400;color:#444;letter-spacing:0.08px;">Empty</span>
<div class="abs" style="left:1059px;top:651.2px;width:36.8px;height:22.6px;border:1px solid #f75c5e;border-radius:3.5px">
</div>
<svg class="i" style="left:1072.0px;top:654.0px" width="10.5" height="13.5" viewBox="0 0 10.5 13.5" >
<path d="M1.4 4.6V.7h5.700L9.500 3.100v8.600H1.400V9" fill="none" stroke="#f5363a" stroke-width=".75"/>
<path d="M6.900.4v3h3z" fill="#f5222d"/>
<rect x=".3" y="5.100" width="7.700" height="3" rx=".4" fill="#f5222d"/>
<path d="M1.300 6.600h1.500M3.400 6.600h1.600M5.600 6.600h1.500" stroke="#ffd0d0" stroke-width=".8"/>
<path d="M5.500 8.800v3" stroke="#f5222d" stroke-width="1.200"/>
<path d="M3.700 10.700h3.600L5.500 13.200z" fill="#f5222d"/>
</svg>
<span class="t md" style="left:328.0px;top:683.8px;font-size:9.7px;font-weight:400;color:#222;letter-spacing:0.30px;">Mahoni</span>
<span class="t" style="left:328.0px;top:698.1px;font-size:8.6px;font-weight:400;color:#333;letter-spacing:-0.02px;">Swietenia Mahagoni</span>
<span class="t md" style="left:328.0px;top:726.0px;font-size:9.7px;font-weight:400;color:#222;letter-spacing:0.27px;">Jati Putih</span>
<span class="t" style="left:328.0px;top:740.0px;font-size:8.6px;font-weight:400;color:#333;letter-spacing:0.06px;">Gmelina Arborea</span>
<div class="abs" style="left:419.2px;top:683.2px;width:599.8px;height:24.4px;border-radius:3.5px 0 0 3.5px;background:linear-gradient(90deg,#00b647 0,#00b647 597.6px,#ffd600 597.6px)">
</div>
<div class="abs" style="left:419.2px;top:725.5px;width:599.8px;height:24.4px;border-radius:3.5px 0 0 3.5px;background:linear-gradient(90deg,#00b647 0,#00b647 562.6px,#ffdb00 562.6px,#ffdb00 595.8px,#ff1a00 595.8px)">
</div>
<span class="t" style="left:704.3px;top:692.6px;font-size:8.3px;font-weight:400;color:#2d6b3c;letter-spacing:-0.09px;">99.69%</span>
<span class="t" style="left:687.0px;top:734.4px;font-size:8.3px;font-weight:400;color:#2d6b3c;letter-spacing:-0.23px;">93.83%</span>
<span class="t" style="left:987.4px;top:734.5px;font-size:8.2px;font-weight:400;color:#8c7a12;letter-spacing:-0.23px;">5.56%</span>
<span class="t" style="left:1002.8px;top:710.9px;font-size:8.2px;font-weight:400;color:#4fcf7f;letter-spacing:0.26px;">320</span>
<span class="t md2" style="left:1031.1px;top:695.4px;font-size:11.8px;font-weight:400;color:#222;letter-spacing:-0.77px;">321</span>
<span class="t md2" style="left:1031.1px;top:737.5px;font-size:11.8px;font-weight:400;color:#222;letter-spacing:-0.77px;">162</span>
</div>
</div>
<div class="abs nav">
</div>
<div class="abs pillnav">
</div>
<svg class="i" style="left:322.6px;top:157.2px" width="7.4" height="7.6" viewBox="0 0 7.4 7.6" >
<path d="M0 0h3.200v4.200H0zM4.200 0h3.200v2.600H4.200zM0 5.200h3.200v2.400H0zM4.200 3.600h3.200v4H4.200z" fill="#0a8536"/>
</svg>
<span class="t md" style="left:334.5px;top:156.0px;font-size:10.7px;font-weight:400;color:#0a8536;letter-spacing:-0.04px;">Dashboard</span>
<svg class="i" style="left:403.3px;top:157.0px" width="8.2" height="8.2" viewBox="0 0 8.2 8.2" >
<circle cx="4.100" cy="4.100" r="4.100" fill="#838383"/>
<path d="M4.100 1.800v2.500l1.700 1" stroke="#fff" stroke-width=".9" fill="none"/>
</svg>
<span class="t md1" style="left:415.6px;top:156.0px;font-size:10.7px;font-weight:400;color:#7b7b7b;letter-spacing:0.18px;">Activity</span>
<svg class="i" style="left:469.6px;top:156.8px" width="6.4" height="8.8" viewBox="0 0 6.4 8.8" >
<path d="M3.2 0v8.800" stroke="#808080" stroke-width="1.100"/>
<path d="M1.200 2h4M0 4.300h6.400M.7 6.600h5" stroke="#808080" stroke-width="1.150"/>
<path d="M1.700 1.200L3.200 0l1.500 1.200M.6 3.400L3.200 1.600l2.600 1.800M1 5.700L3.200 4l2.200 1.700" stroke="#808080" stroke-width=".6" fill="none"/>
</svg>
<span class="t md1" style="left:480.9px;top:156.0px;font-size:10.7px;font-weight:400;color:#7b7b7b;letter-spacing:-0.36px;">Trees</span>
<svg class="i" style="left:523.4px;top:157.0px" width="9.0" height="8.2" viewBox="0 0 9 8.200" >
<circle cx="2.300" cy="2" r="1.600" fill="none" stroke="#838383" stroke-width=".9"/>
<path d="M2.300 3.600v2.200M.5 7.700V5.800h3.300L6 4.400 8.500 5.600v2.100z" fill="none" stroke="#838383" stroke-width=".9" stroke-linejoin="round"/>
</svg>
<span class="t md1" style="left:535.8px;top:156.0px;font-size:10.7px;font-weight:400;color:#7b7b7b;letter-spacing:-0.05px;">Plant Area</span>
<svg class="i" style="left:601.8px;top:156.8px" width="9.0" height="9.0" viewBox="0 0 9 9" >
<path d="M5.400.7l2.900 2.900-1.400 1.400L4 2.100zM2.100 4l2.900 2.900-1.400 1.400L.7 5.400z" fill="#838383"/>
<path d="M3.300 3.300l2.400 2.400" stroke="#838383" stroke-width="1.600"/>
<path d="M.6 7.200c.7.700 1.400 1 2.300 1" stroke="#838383" stroke-width=".7" fill="none"/>
</svg>
<span class="t md1" style="left:614.0px;top:156.0px;font-size:10.7px;font-weight:400;color:#7b7b7b;letter-spacing:-0.13px;">Satellite</span>
<svg class="i" style="left:667.6px;top:158.0px" width="9.8" height="6.6" viewBox="0 0 9.800 6.600" >
<circle cx="3.300" cy="1.700" r="1.700" fill="#838383"/>
<path d="M0 6.600V5.500C0 4.300 2.200 3.800 3.300 3.800s3.300.5 3.300 1.700v1.100z" fill="#838383"/>
<circle cx="7.200" cy="1.900" r="1.400" fill="#838383"/>
<path d="M7.300 3.900c1.100.1 2.500.6 2.500 1.600v1.100H7.600V5.500c0-.7-.4-1.200-.9-1.600z" fill="#838383"/>
</svg>
<span class="t md1" style="left:680.5px;top:156.0px;font-size:10.7px;font-weight:400;color:#7b7b7b;letter-spacing:-0.15px;">Caretaker</span>
<svg class="i" style="left:744.2px;top:157.2px" width="7.4" height="7.6" viewBox="0 0 7.4 7.6" >
<path d="M0 0h3.200v4.200H0zM4.200 0h3.200v2.600H4.200zM0 5.200h3.200v2.400H0zM4.200 3.600h3.200v4H4.200z" fill="#838383"/>
</svg>
<span class="t md1" style="left:755.8px;top:156.0px;font-size:10.7px;font-weight:400;color:#7b7b7b;letter-spacing:-0.10px;">Report</span>
<svg class="i" style="left:804.9px;top:157.0px" width="7.8" height="7.8" viewBox="0 0 7.800 7.800" >
<circle cx="3.900" cy="3.900" r="3.900" fill="#838383"/>
<path d="M3.900 3.400v2.600M3.900 1.700v1" stroke="#fff" stroke-width=".9"/>
</svg>
<span class="t md1" style="left:817.0px;top:156.0px;font-size:10.7px;font-weight:400;color:#7b7b7b;letter-spacing:0.19px;">About</span>
</div>
</div>
<div class="abs notch">
</div>
<div class="abs" style="left:647.8px;top:20px;width:3.2px;height:3.2px;background:radial-gradient(circle at 0 100%,rgba(0,0,0,0) 2.9px,#000 3.3px)">
</div>
<div class="abs" style="left:774.4px;top:20px;width:3.2px;height:3.2px;background:radial-gradient(circle at 100% 100%,rgba(0,0,0,0) 2.9px,#000 3.3px)">
</div>
<div class="abs dot" style="left:705.4px;top:18.6px;width:10px;height:10px;background:radial-gradient(circle,#2f5fd0 0,#1b2f6a 22%,#15161a 40%,#17181b 100%)">
</div>
<div class="abs base">
<svg class="i" style="left:0;top:0;opacity:.16;mix-blend-mode:multiply" width="1422" height="47">
<filter id="nz" x="0" y="0" width="100%" height="100%">
<feTurbulence type="fractalNoise" baseFrequency=".9" numOctaves="2" seed="3"/>
<feColorMatrix type="saturate" values="0"/>
</filter>
<rect width="1422" height="47" filter="url(#nz)"/>
</svg>
</div>
<div class="abs lip">
</div>
<div class="abs foot" style="left:72.6px">
</div>
<div class="abs foot" style="left:1269.4px">
</div>
</body>
</html>
